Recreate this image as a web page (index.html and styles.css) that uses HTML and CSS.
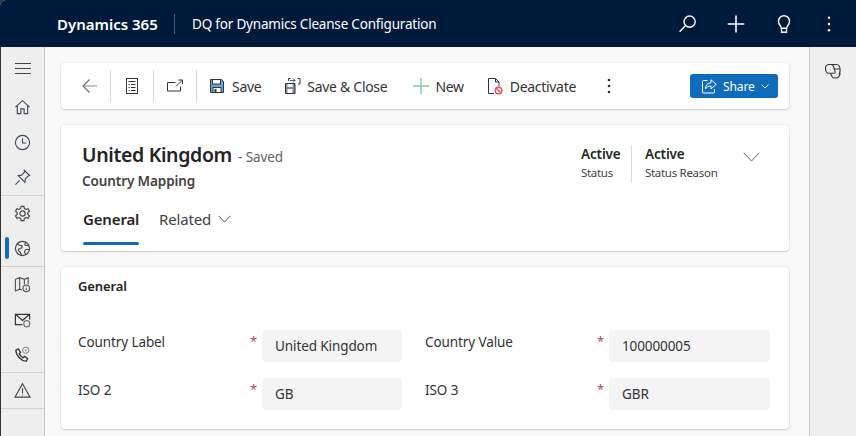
FILE: index.html
```html
<!DOCTYPE html>
<html lang="en">
<head>
<meta charset="utf-8">
<title>DQ for Dynamics Cleanse Configuration</title>
<link rel="stylesheet" href="styles.css">
</head>
<body>
<div class="app">
  <header class="topbar">
    <span class="brand">Dynamics 365</span>
    <span class="appname">DQ for Dynamics Cleanse Configuration</span>
    <div class="topicons">
      <svg width="20" height="20" viewBox="0 0 20 20" fill="none" stroke="#fff" stroke-width="1.4"><circle cx="11.6" cy="7.6" r="5.6"/><path d="M7.6 11.6 1.6 17.8"/></svg>
      <svg width="20" height="20" viewBox="0 0 20 20" fill="none" stroke="#fff" stroke-width="1.6"><path d="M10 1.5v17M1.7 10h16.6"/></svg>
      <svg width="20" height="20" viewBox="0 0 20 20" fill="none" stroke="#fff" stroke-width="1.4"><path d="M7.3 14.2c0-2-2.8-3.6-2.8-7a5.5 5.5 0 0 1 11 0c0 3.4-2.8 5-2.8 7z"/><path d="M7.5 14.5v3.8h5v-3.8"/></svg>
      <svg class="lastdots" width="20" height="20" viewBox="0 0 20 20" fill="#fff"><circle cx="10" cy="3.800" r="1.200"/><circle cx="10" cy="10" r="1.200"/><circle cx="10" cy="16.200" r="1.200"/></svg>
    </div>
  </header>
  <div class="body">
    <nav class="sidebar">
      <div class="navgroup menu">
        <svg width="18" height="12" viewBox="0 0 18 12" stroke="#444" stroke-width="1"><path d="M1 .5h16M1 5.500h16M1 10.500h16"/></svg>
      </div>
      <div class="navgroup">
        <div class="navitem"><svg width="17" height="17" viewBox="0 0 18 18" fill="none" stroke="#3c4a5c" stroke-width="1.200"><path d="M1.500 8.600 9 1.800l7.500 6.800M3.500 7v8.500h3.800v-5h3.400v5h3.800V7"/></svg></div>
        <div class="navitem"><svg width="17" height="17" viewBox="0 0 18 18" fill="none" stroke="#3c4a5c" stroke-width="1.200"><circle cx="9" cy="9" r="7.500"/><path d="M9 4.500V9.500h4"/></svg></div>
        <div class="navitem"><svg width="17" height="17" viewBox="0 0 18 18" fill="none" stroke="#3c4a5c" stroke-width="1.200"><path d="M11 1.500l5.500 5.500-1.500.5-3 3-.5 3.500-7-7 3.500-.5 3-3zM6 12 1.500 16.500"/></svg></div>
      </div>
      <div class="navgroup">
        <div class="navitem"><svg width="17" height="17" viewBox="0 0 18 18" fill="none" stroke="#444" stroke-width="1.200"><circle cx="9" cy="9" r="2.800"/><path d="M7.500 1.500h3l.5 2.300 1.700.9 2.200-.8 1.500 2.600-1.700 1.500v2l1.700 1.500-1.500 2.600-2.200-.8-1.700.9-.5 2.300h-3L7 14.200l-1.700-.9-2.200.8L1.600 11.500 3.300 10V8L1.600 6.500l1.500-2.600 2.200.8 1.700-.9z"/></svg></div>
        <div class="navitem active"><svg width="17" height="17" viewBox="0 0 18 18" fill="none" stroke="#444" stroke-width="1.200"><circle cx="9" cy="9" r="7.500"/><path d="M3 4.500c2 .5 3 1.500 4.500 1.500s1.500 1.800.2 2.500-3 .5-3.200 2 2 1.500 2.500 3 .5 2 1 2.800M12.500 2.500c-1 1-1.500 2.500-.5 3s3.500 0 4 1M16.200 10.500c-1.500-.8-3.500-.8-4.500.5s-.5 3 .8 3.800"/></svg></div>
      </div>
      <div class="navgroup">
        <div class="navitem"><svg width="17" height="17" viewBox="0 0 18 18" fill="none" stroke="#555" stroke-width="1.200"><path d="M1.500 3.500 6 1.800l5 1.700 4-1.700v7M1.500 3.500v12.300L6 14l2.500.9M6 1.800V14M11 3.500V9"/><circle cx="13" cy="13" r="3.500"/><path d="M13 12.500v2.300M13 11v.6"/></svg></div>
        <div class="navitem"><svg width="17" height="17" viewBox="0 0 18 18" fill="none" stroke="#333" stroke-width="1.300"><path d="M9 14.500H1.500v-11h15V9M1.500 3.500 9 10l7.500-6.500"/><circle cx="13.500" cy="13.500" r="3.200" stroke="#777"/></svg></div>
        <div class="navitem"><svg width="17" height="17" viewBox="0 0 18 18" fill="none" stroke="#333" stroke-width="1.400"><path d="M2 4.500 4.500 3 7 6.500 5.500 8.300c.8 1.700 2.300 3.300 4 4.200l1.800-1.500 3.200 2.500-1.500 2.500C8 16.500 2 10 2 4.500z"/><circle cx="12.500" cy="4.500" r="3.300" stroke="#777" stroke-width="1"/><path d="M12.500 3.500v2.300" stroke="#777" stroke-width="1"/></svg></div>
      </div>
      <div class="navgroup">
        <div class="navitem"><svg width="17" height="17" viewBox="0 0 18 18" fill="none" stroke="#444" stroke-width="1.200"><path d="M9 1.800 17 16H1zM9 6.500v5.500M9 13.200v1"/></svg></div>
      </div>
    </nav>
    <main class="main">
      <section class="card toolbar">
        <button class="tool iconly"><svg width="18" height="16" viewBox="0 0 18 16" fill="none" stroke="#8a8a8a" stroke-width="1.100"><path d="M2 8h14"/><path d="M8.500 1.500 2 8l6.500 6.500" stroke="#5f6f80"/></svg></button>
        <span class="sep"></span>
        <button class="tool iconly"><svg width="14" height="16" viewBox="0 0 14 16" fill="none" stroke="#333" stroke-width="1"><rect x="1.500" y=".5" width="11" height="15"/><path d="M3.500 3.500h7M3.500 6.500h1.200M6 6.500h4.500M3.500 9.500h1.200M6 9.500h4.500M3.500 12.500h1.200M6 12.500h4.500"/></svg></button>
        <span class="sep"></span>
        <button class="tool iconly"><svg width="17" height="14" viewBox="0 0 17 14" fill="none" stroke="#333" stroke-width="1"><path d="M8.500 3.500H.5v8.500h13V7.500"/><path d="M9 7.500 15 1.500M11.500 1H15.500V5"/></svg></button>
        <span class="sep"></span>
        <button class="tool save"><svg width="14" height="14" viewBox="0 0 14 14"><path d="M.5.500h11l2 2v11H.5z" fill="#69a8dc" stroke="#333"/><rect x="2.500" y=".5" width="8" height="4.500" fill="#fff" stroke="#333"/><rect x="3" y="8.500" width="8" height="5" fill="#fff" stroke="#333"/><rect x="4.500" y="10" width="2" height="3.500" fill="#333"/></svg>Save</button>
        <button class="tool saveclose"><svg width="16" height="16" viewBox="0 0 16 16"><path d="M.5 5.500h9.500v10H.5z" fill="#7d8b98" stroke="#333"/><rect x="2.500" y="6" width="5" height="3" fill="#fff"/><rect x="2.500" y="11" width="5" height="4" fill="#fff"/><path d="M5 2.500h5M8 .5 10 2.500 8 4.500" fill="none" stroke="#106ebe"/><path d="M3.500 3V.5h2M12.500.5h2.500V6h-2" fill="none" stroke="#333"/></svg>Save &amp; Close</button>
        <button class="tool new"><svg width="16" height="16" viewBox="0 0 16 16" stroke="#7fcba0" stroke-width="1.400"><path d="M8 0v16M0 8h16"/></svg>New</button>
        <button class="tool deact"><svg width="16" height="17" viewBox="0 0 16 17"><path d="M7 15.500H1.500V.5h7L12 4v4M8.500.5V4H12" fill="none" stroke="#333"/><circle cx="11.500" cy="12.500" r="3.300" fill="#fff" stroke="#e8505b" stroke-width="1.400"/><path d="M9.300 10.300 13.700 14.700" stroke="#e8505b" stroke-width="1.400"/></svg>Deactivate</button>
        <button class="tool more"><svg width="4" height="16" viewBox="0 0 4 16" fill="#333"><circle cx="2" cy="2" r="1.300"/><circle cx="2" cy="8" r="1.300"/><circle cx="2" cy="14" r="1.300"/></svg></button>
        <button class="share"><svg width="15" height="15" viewBox="0 0 15 15" fill="none" stroke="#fff" stroke-width="1"><path d="M5.500 1.500H1.500a1 1 0 0 0-1 1v10.500a1 1 0 0 0 1 1H11.500a1 1 0 0 0 1-1V10"/><path d="M9 .8v3C5.500 4 3.500 6 3.500 10c1.300-2.300 3-3 5.500-3v3L14.300 5.300z"/></svg>Share<svg width="8" height="5" viewBox="0 0 8 5" fill="none" stroke="#fff" stroke-width=".9"><path d="M.5.500 4 4 7.500.5"/></svg></button>
      </section>
      <section class="card record">
        <div class="rechead">
          <div class="rectitle">
            <div class="titleline"><h1>United Kingdom</h1><span class="saved">- Saved</span></div>
            <div class="entity">Country Mapping</div>
          </div>
          <div class="statuses">
            <div class="status first"><strong>Active</strong><span>Status</span></div>
            <div class="status"><strong>Active</strong><span>Status Reason</span></div>
            <svg class="expander" width="17" height="10" viewBox="0 0 17 10" fill="none" stroke="#666" stroke-width="1"><path d="M.8.800 8.500 9 16.200.8"/></svg>
          </div>
        </div>
        <div class="tabs">
          <div class="tab current">General</div>
          <div class="tab">Related<svg width="13" height="8" viewBox="0 0 13 8" fill="none" stroke="#555" stroke-width="1"><path d="M.6.800 6.500 7 12.400.800"/></svg></div>
        </div>
      </section>
      <section class="card form">
        <h2>General</h2>
        <div class="grid">
          <div class="field"><label>Country Label</label><span class="req">*</span><div class="value">United Kingdom</div></div>
          <div class="field wide"><label>Country Value</label><span class="req">*</span><div class="value">100000005</div></div>
          <div class="field"><label>ISO 2</label><span class="req">*</span><div class="value">GB</div></div>
          <div class="field wide"><label>ISO 3</label><span class="req">*</span><div class="value">GBR</div></div>
        </div>
      </section>
    </main>
    <aside class="rightrail">
      <svg width="16" height="16" viewBox="0 0 16 16" fill="none" stroke="#333" stroke-width="1.100"><path d="M3.500 1.500c-1.600.2-2.700 1.300-3 2.800-.2 1.500.1 3 .7 4.400.5 1 1.300 1.500 2.300 1.500h5.500c.9 0 1.400-.8 1.100-1.700L8.300 3C7.900 2 7 1.500 6 1.500z"/><path d="M6 1.500h5.500c1 0 2 .5 2.700 1.500.8 1.400 1.100 3 .9 4.700-.1 1.300-.4 2.500-1.200 3.600M5.500 10.700 7.300 14c.4.700 1 1 1.800 1h2.400c1.200 0 2-.6 2.600-1.700.5-1 .9-2.100 1-3.300M9.500 6h5.300"/></svg>
    </aside>
  </div>
</div>
</body>
</html>
```

FILE: styles.css
```css
* { box-sizing: border-box; }
html, body { margin: 0; padding: 0; height: 100%; overflow: hidden; background: #333; }
body { font-family: "Noto Sans", "Open Sans", sans-serif; font-size: 13px; color: #242424; }
.app { width: 856px; height: 436px; display: flex; flex-direction: column; background: #f8f8f8; border-radius: 6px 0 0 0; overflow: hidden; }
.topbar { height: 47px; flex: none; background: #001a3c; color: #fff; display: flex; align-items: center; padding-left: 57px; }
.brand { font-weight: 600; font-size: 15px; padding-right: 16px; line-height: 20px; border-right: 1px solid #4a5d78; width: 118px; white-space: nowrap; }
.appname { font-size: 13.5px; padding-left: 17px; letter-spacing: -.2px; white-space: nowrap; }
.topicons { margin-left: auto; display: flex; gap: 28px; padding-right: 17px; }
.lastdots { margin-left: -3px; }
.body { flex: 1; display: flex; min-height: 0; border-left: 1px solid #333; }
.sidebar { width: 44px; flex: none; background: #eeeeee; border-right: 1px solid #c8c8c8; }
.navgroup { border-bottom: 1px solid #d1d1d1; display: flex; flex-direction: column; }
.navgroup.menu { border: 0; height: 43px; align-items: center; justify-content: center; }
.navitem { height: 35px; display: flex; align-items: center; justify-content: center; position: relative; }
.navitem.active::before { content: ""; position: absolute; left: 4px; top: 6px; width: 4px; height: 22px; border-radius: 2px; background: #0f6cbd; }
.main { flex: 1; min-width: 0; padding: 16px 20px 0 16px; display: flex; flex-direction: column; gap: 16px; }
.rightrail { width: 47px; flex: none; background: #efefef; border-left: 1px solid #c8c8c8; display: flex; justify-content: center; padding-top: 16px; }
.card { background: #fff; border-radius: 4px; box-shadow: 0 0 2px rgba(0,0,0,.12), 0 1px 2px rgba(0,0,0,.14); }
.toolbar { height: 46px; flex: none; display: flex; align-items: center; padding: 0 11px 0 0; }
.tool { border: 0; background: none; padding: 0; font: inherit; font-size: 14px; letter-spacing: -.3px; color: #333; display: flex; align-items: center; white-space: nowrap; height: 32px; }
.tool.iconly { justify-content: center; }
.tool.iconly:nth-of-type(1) { width: 49px; padding-left: 8px; }
.tool.iconly:nth-of-type(2), .tool.iconly:nth-of-type(3) { width: 42px; }
.sep { width: 1px; height: 32px; background: #d6d6d6; flex: none; }
.save { margin-left: 13px; gap: 8px; }
.saveclose { margin-left: 24px; gap: 6px; }
.new { margin-left: 26px; gap: 6px; }
.deact { margin-left: 23px; gap: 7px; }
.more { margin-left: 31px; }
.share { margin-left: auto; width: 88px; height: 24px; border: 0; border-radius: 3px; background: #0f6cbd; color: #fff; font: inherit; font-size: 12px; letter-spacing: -.1px; display: flex; align-items: center; padding: 0 0 0 12px; gap: 6px; }
.record { height: 126px; flex: none; display: flex; flex-direction: column; }
.rechead { display: flex; justify-content: space-between; padding: 0 29px 0 21px; height: 77px; }
.rectitle { padding-top: 16px; }
.titleline { display: flex; align-items: baseline; gap: 6px; }
h1 { margin: 0; font-size: 19.5px; line-height: 27px; font-weight: 600; letter-spacing: -.35px; }
.saved { font-size: 13.5px; color: #616161; letter-spacing: -.1px; }
.entity { font-size: 13.5px; font-weight: 600; color: #424242; margin-top: 4px; line-height: 18px; letter-spacing: -.1px; }
.statuses { display: flex; align-items: flex-start; padding-top: 20px; }
.status { display: flex; flex-direction: column; height: 38px; padding-left: 13px; width: 99px; }
.status.first { width: 51px; padding: 0 11px 0 0; border-right: 1px solid #dcdcdc; }
.status strong { font-size: 13.5px; font-weight: 600; line-height: 19px; letter-spacing: -.15px; }
.status span { font-size: 11.5px; line-height: 17px; color: #424242; letter-spacing: -.3px; white-space: nowrap; }
.expander { margin-top: 7px; margin-left: 12px; }
.tabs { display: flex; padding-left: 22px; gap: 20px; flex: 1; }
.tab { position: relative; height: 49px; line-height: 35px; font-size: 15px; letter-spacing: -.15px; color: #424242; display: flex; align-items: flex-start; gap: 7px; }
.tab svg { margin-top: 13px; }
.tab.current { font-weight: 600; color: #242424; width: 56px; }
.tab.current::after { content: ""; position: absolute; left: 0; right: 0; bottom: 6px; height: 3px; border-radius: 2px; background: #0f6cbd; }
.form { height: 162px; flex: none; padding: 10px 19px 0 17px; }
h2 { margin: 0; font-size: 13px; line-height: 18px; font-weight: 600; letter-spacing: -.1px; }
.grid { display: grid; grid-template-columns: 324px 345px; column-gap: 23px; row-gap: 16px; margin-top: 35px; }
.field { display: flex; height: 32px; }
.field label { flex: 1; font-size: 13.5px; letter-spacing: -.1px; color: #333; line-height: 24px; }
.req { width: 12px; color: #b4455a; font-size: 13px; line-height: 22px; }
.value { width: 140px; height: 32px; background: #f4f4f4; border-radius: 4px; padding-left: 13px; line-height: 32px; font-size: 13.5px; letter-spacing: -.1px; color: #333; }
.wide .value { width: 161px; }
```
